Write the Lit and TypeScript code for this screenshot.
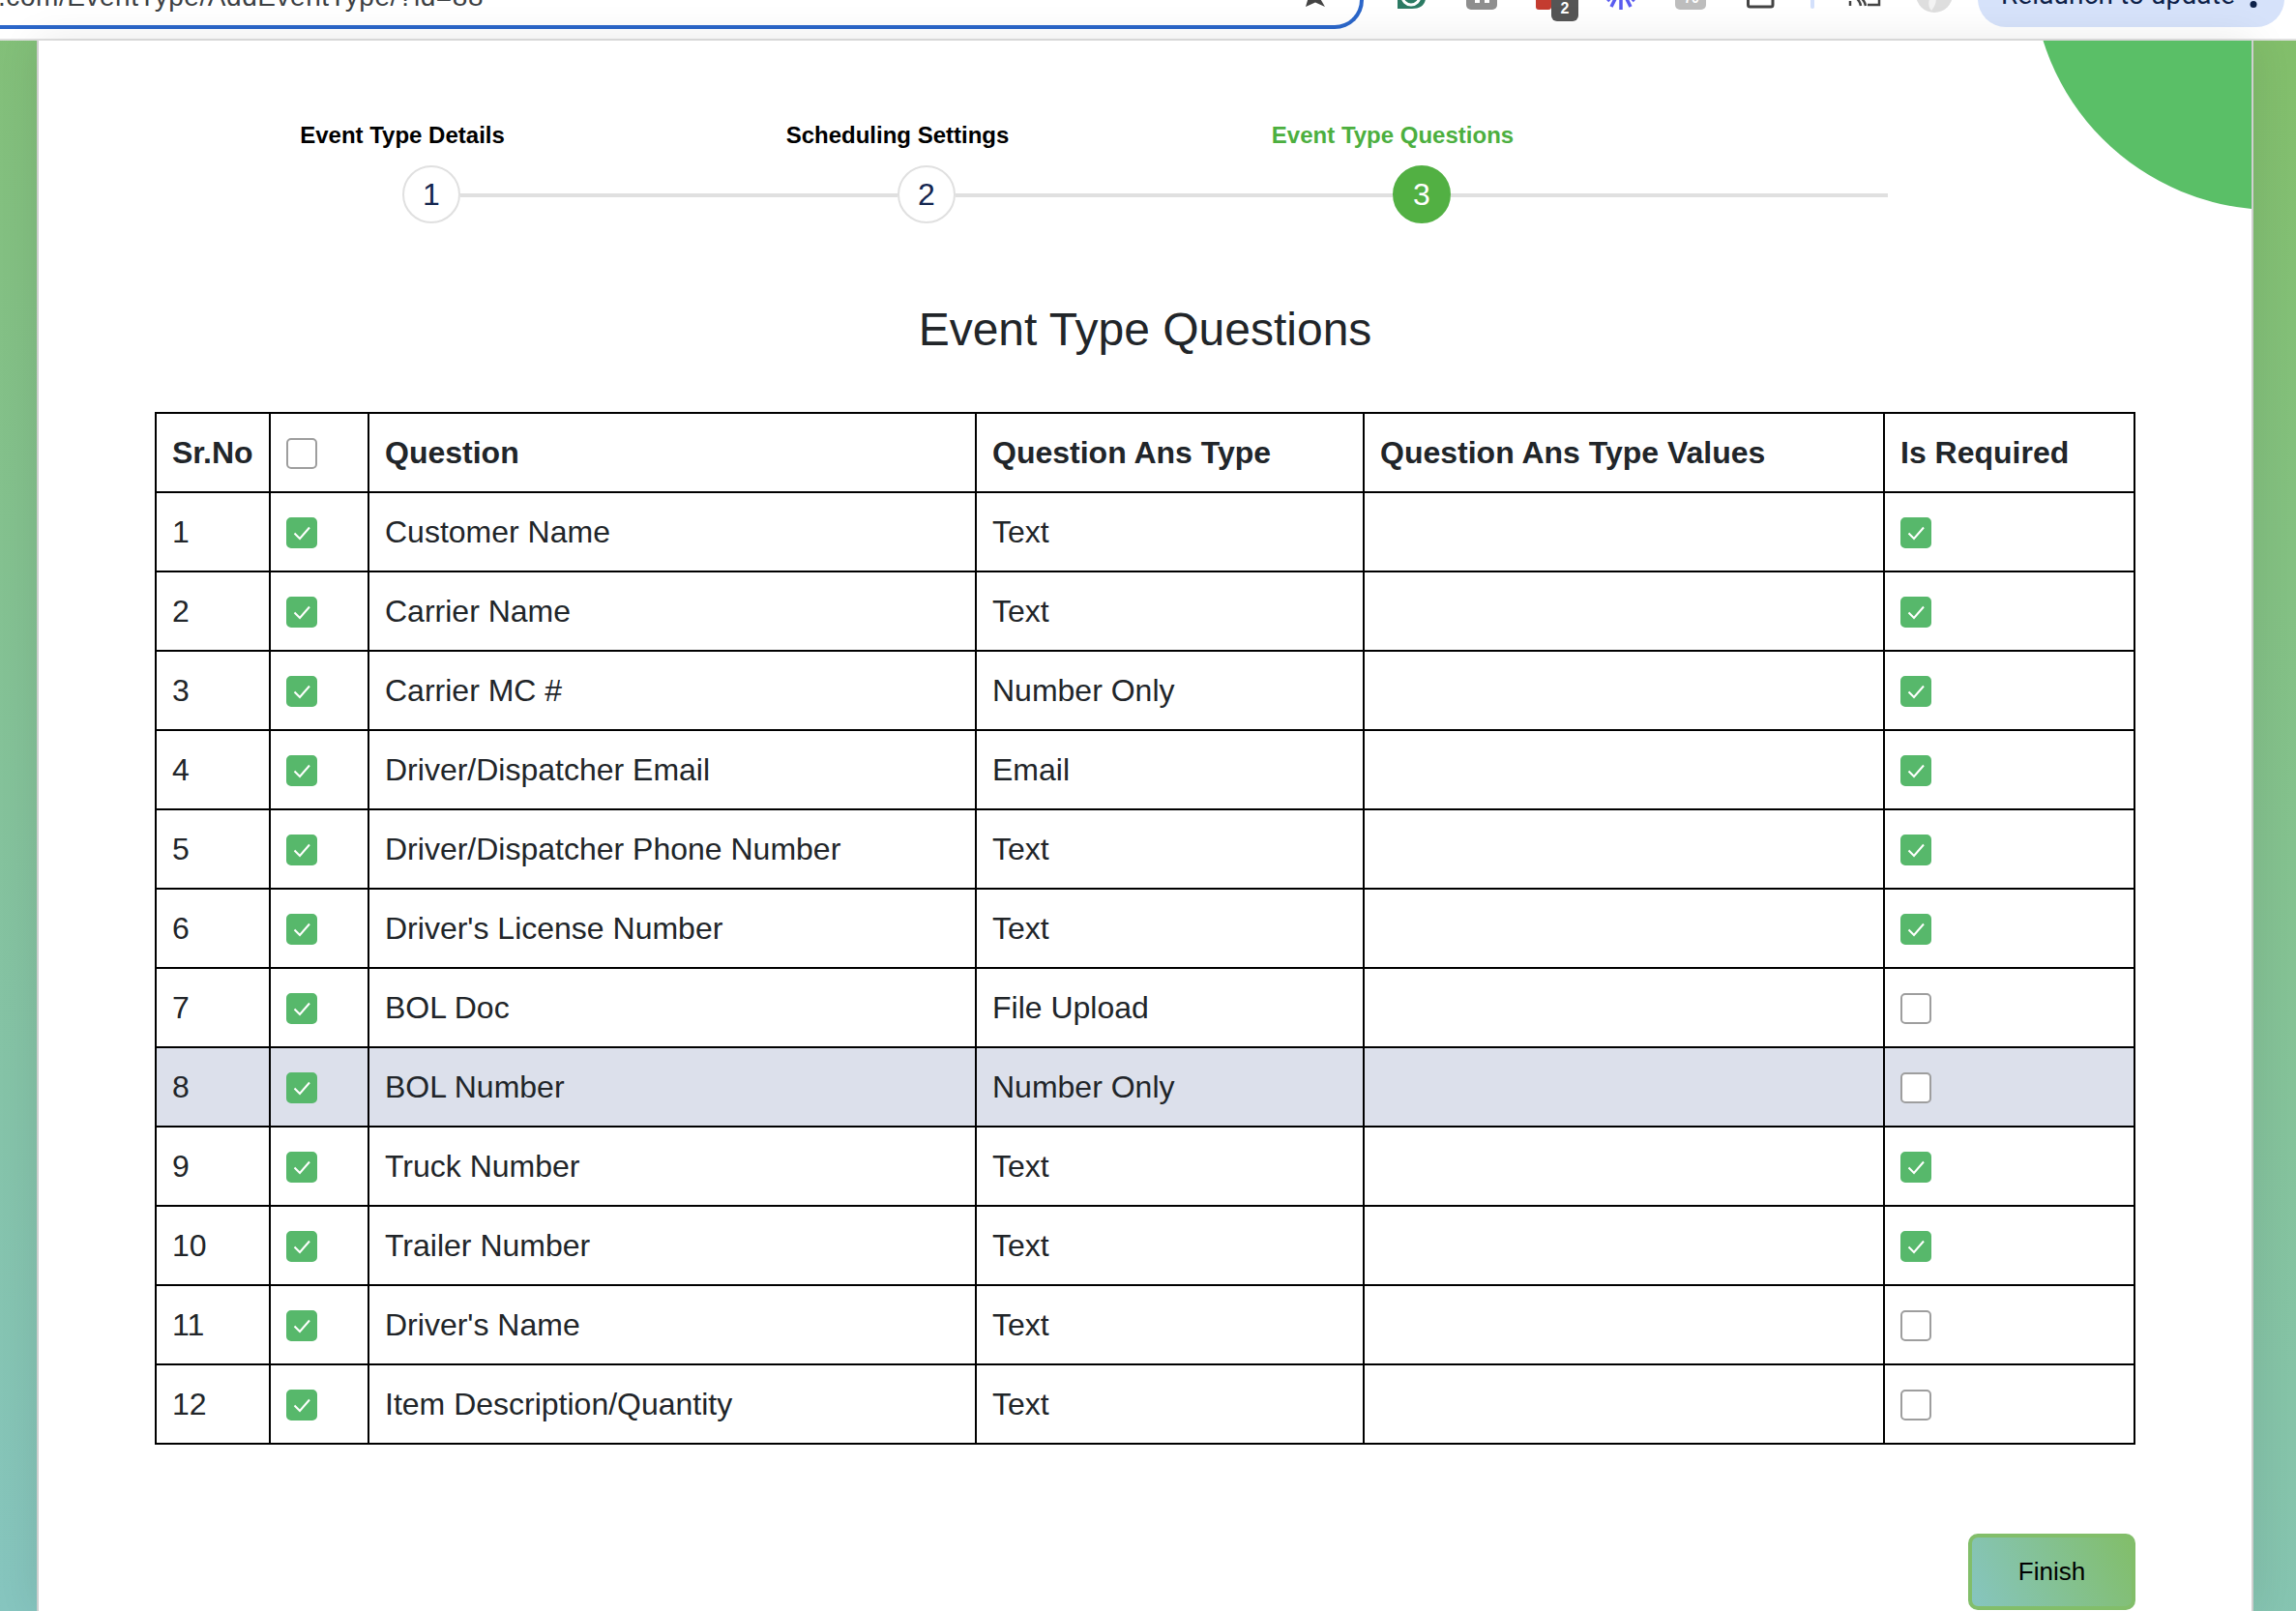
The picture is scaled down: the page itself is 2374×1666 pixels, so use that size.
import { LitElement, html, css, svg } from "lit";
import { customElement } from "lit/decorators.js";

const rows: [string, string, boolean][] = [
  ["Customer Name", "Text", true],
  ["Carrier Name", "Text", true],
  ["Carrier MC #", "Number Only", true],
  ["Driver/Dispatcher Email", "Email", true],
  ["Driver/Dispatcher Phone Number", "Text", true],
  ["Driver's License Number", "Text", true],
  ["BOL Doc", "File Upload", false],
  ["BOL Number", "Number Only", false],
  ["Truck Number", "Text", true],
  ["Trailer Number", "Text", true],
  ["Driver's Name", "Text", false],
  ["Item Description/Quantity", "Text", false],
];

@customElement("app-root")
export class AppRoot extends LitElement {
  static styles = css`
    :host { display: block; width: 2374px; height: 1666px; overflow: hidden; font-family: "Liberation Sans", Arial, sans-serif; background: #fff; }
    .chrome { height: 42px; box-sizing: border-box; border-bottom: 2px solid #e0e0e0; background: #fff; position: relative; overflow: hidden; display: flex; }
    .omni { width: 1410px; height: 30px; box-sizing: border-box; border: 4px solid #2b66c9; border-top: none; border-left: none; border-bottom-right-radius: 32px; flex: none; position: relative; overflow: hidden; }
    .url { position: absolute; left: -2px; top: -18px; font-size: 28px; line-height: 30px; color: #3c4043; white-space: nowrap; letter-spacing: .55px; }
    .tools { position: absolute; inset: 0; pointer-events: none; }
    .tools svg { position: absolute; left: 0; top: 0; }
    .update { position: absolute; left: 2045px; top: -30px; width: 317px; height: 58px; border-radius: 30px; background: #d6e2fa; color: #0d2149; font-family: Roboto, "Liberation Sans", sans-serif; font-size: 28px; letter-spacing: .1px; line-height: 50px; box-sizing: border-box; padding-left: 24px; white-space: nowrap; }
    .page { display: flex; height: 1624px; background: linear-gradient(188deg, #82be6a 0%, #86c5bf 100%); }
    .card { margin-left: 38px; width: 2292px; box-sizing: border-box; background: #fff; border-left: 2px solid #cfcfcf; border-right: 2px solid #cfcfcf; box-shadow: 0 0 40px rgba(0, 0, 0, .09); position: relative; overflow: hidden; padding: 0 120px; flex: none; }
    .blob { position: absolute; left: 2061px; top: -325px; width: 500px; height: 500px; border-radius: 50%; background: #5abf67; }
    .steps { display: flex; padding: 86px 0 0 256px; position: relative; }
    .step { width: 512px; display: flex; flex-direction: column; }
    .anchor { width: 0; height: 43px; display: flex; justify-content: center; white-space: nowrap; font-weight: 700; font-size: 24px; line-height: 24px; color: #000; }
    .track { display: flex; align-items: center; height: 60px; }
    .circle { width: 60px; height: 60px; box-sizing: border-box; border: 2px solid #e0e0e0; border-radius: 50%; background: #fff; color: #14264f; font-size: 32px; display: flex; align-items: center; justify-content: center; flex: none; }
    .line { flex: 1; height: 4px; margin-top: 2px; background: #e0e0e0; }
    .step.active .anchor { color: #4caf3f; }
    .step.active .circle { background: #52b043; border-color: #52b043; color: #fff; }
    h1 { margin: 0; font-weight: 400; font-size: 48px; line-height: 58px; text-align: center; color: #212529; padding-top: 81px; }
    table { margin-top: 56px; border-collapse: collapse; table-layout: fixed; width: 2046px; font-size: 32px; color: #212529; }
    th, td { border: 2px solid #000; height: 82px; box-sizing: border-box; padding: 0 16px; text-align: left; white-space: nowrap; }
    th { font-weight: 700; }
    tr.hl td { background: #dce0eb; }
    .cb { display: block; width: 32px; height: 32px; margin-top: 2px; box-sizing: border-box; border: 2px solid #9e9e9e; border-radius: 5px; background: #fff; }
    .cb.on { background: #57b86b; border-color: #57b86b; }
    .cb svg { display: block; width: 28px; height: 28px; }
    .footer { display: flex; justify-content: flex-end; padding-top: 92px; width: 2048px; }
    .finish { width: 173px; height: 79px; box-sizing: border-box; border: 4px solid #82be6a; border-radius: 10px; background: linear-gradient(65deg, #86c5bf 0%, #82be6a 100%); font: 400 26px "Liberation Sans", Arial, sans-serif; color: #000; padding: 0; }
  `;

  cb(on: boolean) {
    return html`<span class="cb ${on ? "on" : ""}">${on
      ? html`<svg viewBox="0 0 28 28"><path d="M6.5 14.5 L12 20 L22 8.5" fill="none" stroke="#fff" stroke-width="2"/></svg>`
      : ""}</span>`;
  }

  render() {
    const steps = [["Event Type Details", "1"], ["Scheduling Settings", "2"], ["Event Type Questions", "3"]];
    return html`
      <div class="chrome">
        <div class="omni"><span class="url">.com/EventType/AddEventType/?id=88</span></div>
        <div class="tools">
          <svg width="2374" height="40" viewBox="0 0 2374 40">
            ${svg`
              <path d="M1360 -10 L1370 7 L1360 2.5 L1350 7 L1353 -3 Z" fill="#444"/>
              <path d="M1445 -12 H1474 V-2 C1474 5 1468 9 1460 9 H1445 Z" fill="#2b7a63"/>
              <circle cx="1459" cy="-4" r="9" fill="#2b7a63" stroke="#fff" stroke-width="3"/>
              <rect x="1516" y="-12" width="32" height="22" rx="5" fill="#8e8e8e"/>
              <rect x="1525" y="-3" width="5" height="6" fill="#fff"/>
              <rect x="1535" y="-3" width="5" height="6" fill="#fff"/>
              <rect x="1588" y="-12" width="16" height="22" rx="3" fill="#c43c30"/>
              <rect x="1604" y="-10" width="28" height="32" rx="6" fill="#555"/>
              <text x="1618" y="14" font-size="16" font-weight="700" fill="#fff" text-anchor="middle" font-family="Liberation Sans">2</text>
              <path d="M1676 -3 V10 M1671 -3 L1666 7 M1681 -3 L1686 7 M1668 -5 L1662 1 M1684 -5 L1690 1" stroke="#5a5cf0" stroke-width="3.5" fill="none"/>
              <rect x="1732" y="-12" width="32" height="22" rx="5" fill="#bdbdbd"/>
              <text x="1749" y="3" font-size="14" font-weight="700" fill="#fff" text-anchor="middle" font-family="Liberation Sans">70</text>
              <path d="M1807.5 -4 V5 a2 2 0 0 0 2 2 H1831 a2 2 0 0 0 2 -2 V-4" stroke="#444" stroke-width="3" fill="none"/>
              <rect x="1872" y="-5" width="4" height="14" rx="2" fill="#d3e0fb"/>
              <path d="M1913 1 V6 M1917 -4 Q1923 0 1924 6 M1922 -4 Q1928 0 1929 6 M1931 5 H1943 V-4" stroke="#444" stroke-width="2.5" fill="none"/>
              <circle cx="2000" cy="-6" r="19" fill="#dedede"/>
              <path d="M1998 -8 q8 8 -1 19 q-6 -6 1 -19" fill="#f3f3f3"/>
            `}
          </svg>
          <div class="update">Relaunch to update</div>
          <svg width="2374" height="40" viewBox="0 0 2374 40">${svg`<circle cx="2330" cy="4.5" r="3.5" fill="#0d2149"/><circle cx="2330" cy="-7" r="3.5" fill="#0d2149"/>`}</svg>
        </div>
      </div>
      <div class="page">
        <div class="card">
          <div class="blob"></div>
          <div class="steps">
            ${steps.map(([l, n], i) => html`
              <div class="step ${i === 2 ? "active" : ""}">
                <div class="anchor">${l}</div>
                <div class="track"><div class="circle">${n}</div><div class="line"></div></div>
              </div>`)}
          </div>
          <h1>Event Type Questions</h1>
          <table>
            <colgroup>
              <col style="width:118px"/><col style="width:102px"/><col style="width:628px"/><col style="width:401px"/><col style="width:538px"/><col style="width:259px"/>
            </colgroup>
            <thead><tr>
              <th>Sr.No</th><th>${this.cb(false)}</th><th>Question</th><th>Question Ans Type</th><th>Question Ans Type Values</th><th>Is Required</th>
            </tr></thead>
            <tbody>
              ${rows.map((r, i) => html`
                <tr class="${i === 7 ? "hl" : ""}">
                  <td>${i + 1}</td><td>${this.cb(true)}</td><td>${r[0]}</td><td>${r[1]}</td><td></td><td>${this.cb(r[2])}</td>
                </tr>`)}
            </tbody>
          </table>
          <div class="footer"><button class="finish">Finish</button></div>
        </div>
      </div>
    `;
  }
}
